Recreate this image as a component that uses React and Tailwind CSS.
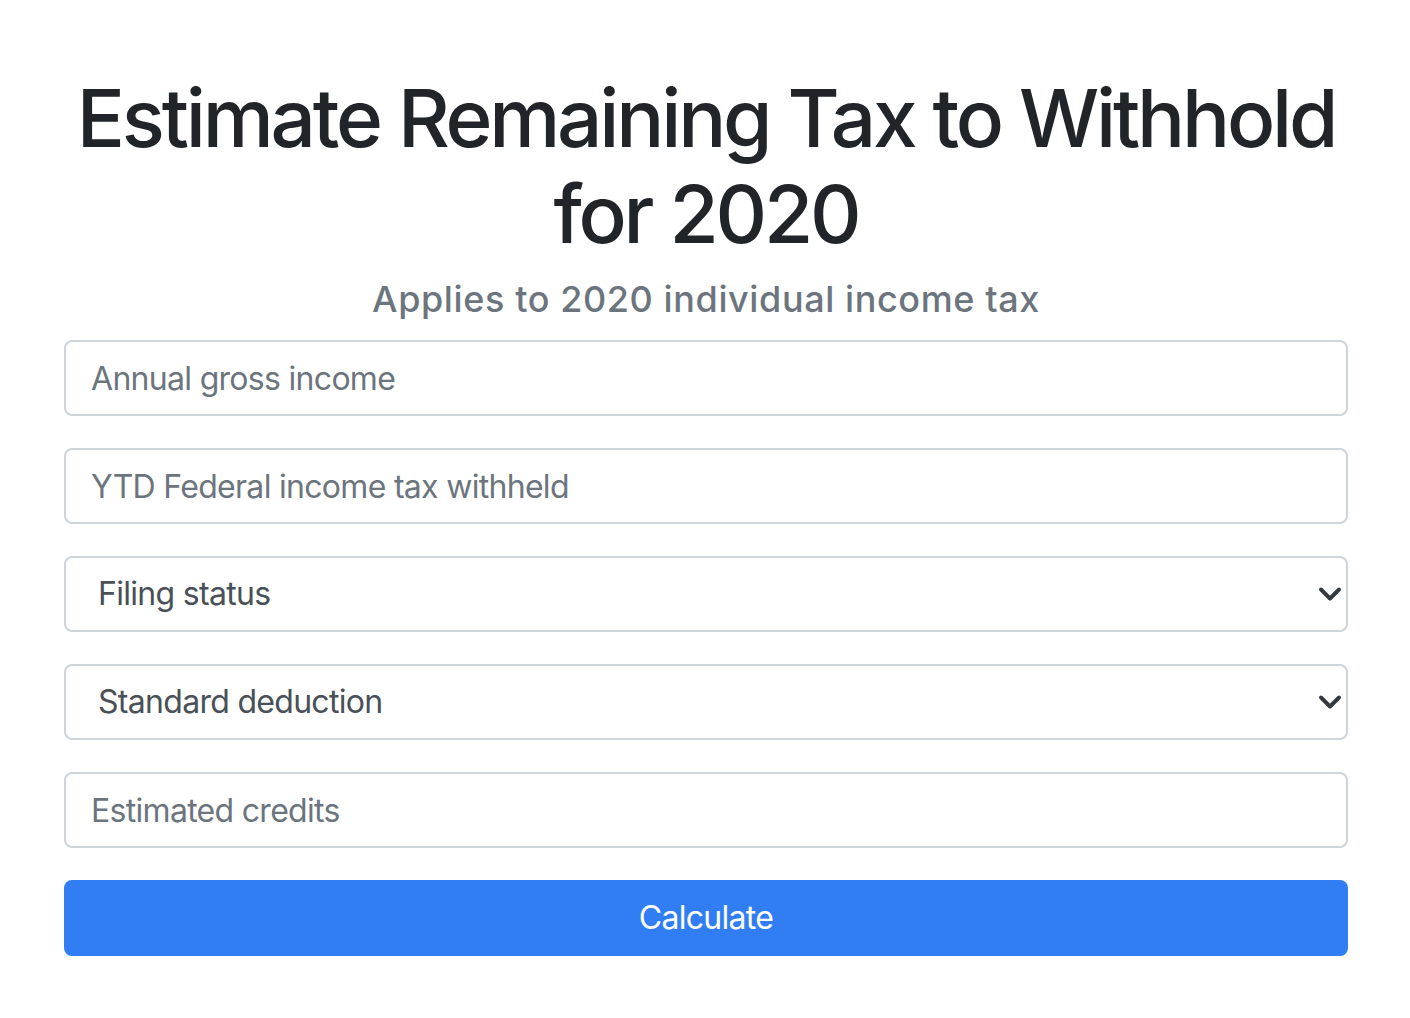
import React, { useState } from 'react';

function Chevron() {
  return (
    <svg
      className="pointer-events-none absolute right-[6px] top-1/2 -translate-y-1/2"
      width="24"
      height="24"
      viewBox="0 0 16 16"
      fill="none"
    >
      <path d="m2 5 6 6 6-6" stroke="#343a40" strokeWidth="2.6" strokeLinecap="round" strokeLinejoin="round" />
    </svg>
  );
}

function TextField({ placeholder, value, onChange }) {
  return (
    <input
      type="text"
      value={value}
      onChange={(e) => onChange(e.target.value)}
      placeholder={placeholder}
      className="block w-full h-[76px] px-[25px] rounded-lg border-2 border-[#ced4da] bg-white text-[32px] tracking-[-0.7px] text-[#495057] placeholder:text-[#6c757d] outline-none"
    />
  );
}

function SelectField({ value, onChange, options }) {
  return (
    <div className="relative">
      <select
        value={value}
        onChange={(e) => onChange(e.target.value)}
        className="block w-full h-[76px] pl-[32px] pr-12 rounded-lg border-2 border-[#ced4da] bg-white text-[32px] tracking-[-0.7px] text-[#495057] appearance-none outline-none"
      >
        {options.map((o) => (
          <option key={o} value={o}>{o}</option>
        ))}
      </select>
      <Chevron />
    </div>
  );
}

export default function App() {
  const [income, setIncome] = useState('');
  const [withheld, setWithheld] = useState('');
  const [status, setStatus] = useState('Filing status');
  const [deduction, setDeduction] = useState('Standard deduction');
  const [credits, setCredits] = useState('');

  return (
    <div className="min-h-screen bg-white font-['Inter','Liberation_Sans',sans-serif]">
      <div className="w-[1284px] ml-[64px] pt-[70px]">
        <h1 className="text-center text-[80px] leading-[96px] font-medium tracking-[-3.2px] text-[#212529] mb-4">
          <span className="block whitespace-nowrap">Estimate Remaining Tax to Withhold</span>
          <span className="block">for 2020</span>
        </h1>
        <h2 className="text-center text-[36px] leading-[43px] font-medium tracking-[0.6px] text-[#6c757d] mb-[19px]">
          Applies to 2020 individual income tax
        </h2>
        <form className="flex flex-col gap-8" onSubmit={(e) => e.preventDefault()}>
          <TextField placeholder="Annual gross income" value={income} onChange={setIncome} />
          <TextField placeholder="YTD Federal income tax withheld" value={withheld} onChange={setWithheld} />
          <SelectField
            value={status}
            onChange={setStatus}
            options={['Filing status', 'Single', 'Married filing jointly', 'Married filing separately', 'Head of household']}
          />
          <SelectField
            value={deduction}
            onChange={setDeduction}
            options={['Standard deduction', 'Itemized deduction']}
          />
          <TextField placeholder="Estimated credits" value={credits} onChange={setCredits} />
          <button
            type="submit"
            className="w-full h-[76px] rounded-lg bg-[#317ef4] text-white text-[32px] tracking-[-0.7px]"
          >
            Calculate
          </button>
        </form>
      </div>
    </div>
  );
}
